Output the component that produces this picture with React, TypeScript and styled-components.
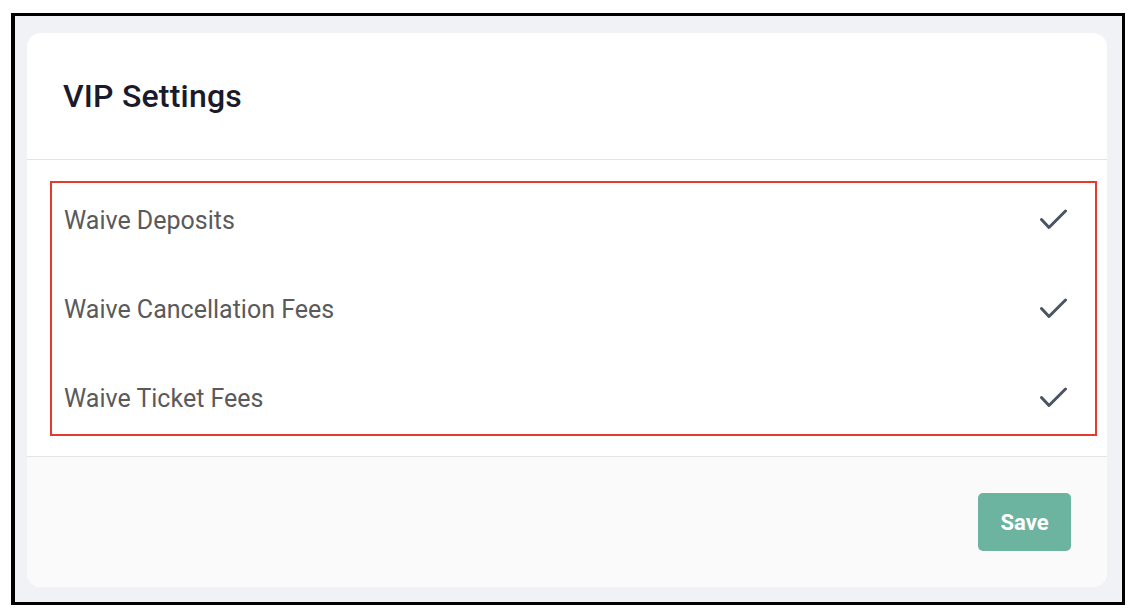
import styled, { createGlobalStyle } from "styled-components";

const GlobalStyle = createGlobalStyle`
  html, body {
    margin: 0;
    background: #ffffff;
  }
  body {
    padding: 13px 11px 0 11px;
    font-family: Roboto, "Liberation Sans", sans-serif;
  }
`;

const Frame = styled.div`
  box-sizing: border-box;
  width: 1114px;
  height: 592px;
  border: 3px solid #000;
  border-left-width: 4px;
  background: #f1f2f6;
  padding: 17px 15px 15px 12px;
`;

const Card = styled.section`
  box-sizing: border-box;
  height: 100%;
  background: #fff;
  border-radius: 14px;
  display: flex;
  flex-direction: column;
  overflow: hidden;
`;

const Header = styled.header`
  height: 126px;
  display: flex;
  align-items: center;
  padding: 0 36px;
  border-bottom: 1px solid #e4e4e6;
`;

const Title = styled.h2`
  margin: 0;
  font-size: 32px;
  font-weight: 500;
  color: #1a1a2c;
  letter-spacing: 0.2px;
`;

const Body = styled.div`
  padding: 21px 10px 20px 23px;
  border-bottom: 1px solid #e4e4e6;
`;

const List = styled.ul`
  list-style: none;
  margin: 0;
  padding: 16px 28px 15px 12px;
  border: 2px solid #e53a2f;
  display: flex;
  flex-direction: column;
  gap: 47px;
`;

const Row = styled.li`
  height: 42px;
  display: flex;
  align-items: center;
  justify-content: space-between;
`;

const Label = styled.span`
  font-size: 25px;
  color: #5a5a5a;
`;

const Footer = styled.footer`
  flex: 1;
  background: #fafafa;
  display: flex;
  justify-content: flex-end;
  align-items: center;
  padding: 0 36px;
`;

const SaveButton = styled.button`
  width: 93px;
  height: 58px;
  border: none;
  border-radius: 5px;
  background: #6cb4a0;
  color: #fff;
  font-family: Roboto, "Liberation Sans", sans-serif;
  font-size: 22px;
  font-weight: 700;
`;

function Check() {
  return (
    <svg width="27" height="22" viewBox="0 0 27 22" fill="none">
      <path
        d="M1.5 10.5 L9 18.5 L25.5 2"
        stroke="#4a5561"
        strokeWidth="3"
        strokeLinecap="round"
        strokeLinejoin="round"
      />
    </svg>
  );
}

const options = ["Waive Deposits", "Waive Cancellation Fees", "Waive Ticket Fees"];

export default function App() {
  return (
    <>
      <GlobalStyle />
      <Frame>
        <Card>
          <Header>
            <Title>VIP Settings</Title>
          </Header>
          <Body>
            <List>
              {options.map((opt) => (
                <Row key={opt}>
                  <Label>{opt}</Label>
                  <Check />
                </Row>
              ))}
            </List>
          </Body>
          <Footer>
            <SaveButton>Save</SaveButton>
          </Footer>
        </Card>
      </Frame>
    </>
  );
}
